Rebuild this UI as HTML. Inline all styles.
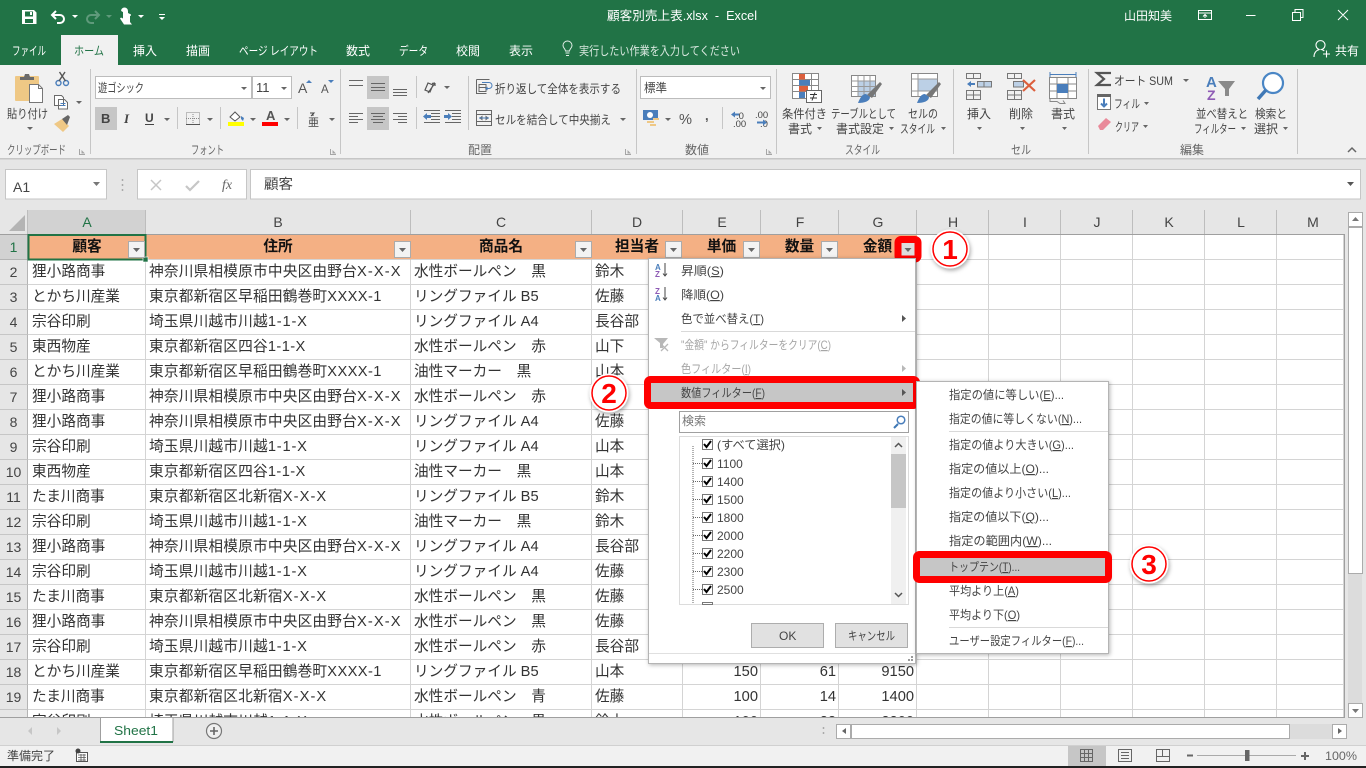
<!DOCTYPE html>
<html lang="ja"><head><meta charset="utf-8"><title>顧客別売上表.xlsx - Excel</title>
<style>
html,body{margin:0;padding:0;width:1366px;height:768px;overflow:hidden;background:#e6e6e6}
body{position:relative;font-family:"Liberation Sans","Noto Sans CJK JP",sans-serif}
#grid{position:absolute;left:0;top:235px;width:1345px;height:482px;overflow:hidden;background:#fff}
table{border-collapse:separate;border-spacing:0;table-layout:fixed;width:1344px;font-size:14.67px;color:#333}
td{height:25px;box-sizing:border-box;border-right:1px solid #d4d4d4;border-bottom:1px solid #d4d4d4;padding:0 0 0 3px;white-space:nowrap;overflow:hidden;line-height:23px}
td:nth-child(2){padding-left:4px}
td:nth-child(3){letter-spacing:.2px}
td.r{background:#e6e6e6;text-align:center;padding:0;border-right:1px solid #b4b4b4;border-bottom:1px solid #c6c6c6;font-size:14px;color:#444}
tr.h td{background:#f4b084;text-align:center;font-weight:bold;color:#111;padding:0;border-color:#f4b084;border-bottom-color:#d4d4d4;letter-spacing:0}
tr.h td:nth-child(2){padding-left:1px}
tr.h td.r{background:#d2d2d2;color:#217346;font-weight:normal;border-color:#b4b4b4}
td.n{text-align:right;padding:0 2px 0 0}
i{font-style:normal;letter-spacing:1.1px}
i.q{letter-spacing:.4px}
i.p{letter-spacing:.8px}
svg{position:absolute;left:0;top:0}
svg text{font-family:"Liberation Sans","Noto Sans CJK JP",sans-serif;font-size:12px;fill:#444}
.w{fill:#fff}.d{fill:#666}.gr{fill:#a6a6a6}
.u{text-decoration:underline}
.b{fill:#4a7ebb}.l{fill:none;stroke:#666;stroke-width:1}
.s{fill:none;stroke:#fff;stroke-width:1.5}
.c{fill:none;stroke:#777;stroke-width:1}
</style></head><body>
<div id="grid"><table>
<colgroup><col style="width:28px"><col style="width:118px"><col style="width:265px"><col style="width:181px"><col style="width:91px"><col style="width:78px"><col style="width:78px"><col style="width:78px"><col style="width:72px"><col style="width:72px"><col style="width:72px"><col style="width:72px"><col style="width:72px"><col style="width:67px"></colgroup>
<tr class="h"><td class="r">1</td><td>顧客</td><td>住所</td><td>商品名</td><td>担当者</td><td>単価</td><td>数量</td><td>金額</td><td style="background:#fff;border-color:#d4d4d4"></td><td style="background:#fff;border-color:#d4d4d4"></td><td style="background:#fff;border-color:#d4d4d4"></td><td style="background:#fff;border-color:#d4d4d4"></td><td style="background:#fff;border-color:#d4d4d4"></td><td style="background:#fff;border-color:#d4d4d4"></td></tr>
<tr><td class="r">2</td><td>狸小路商事</td><td>神奈川県相模原市中央区由野台<i>X-X-X</i></td><td>水性ボールペン　黒</td><td>鈴木</td><td></td><td></td><td></td><td></td><td></td><td></td><td></td><td></td><td></td></tr>
<tr><td class="r">3</td><td>とかち川産業</td><td>東京都新宿区早稲田鶴巻町<i class="q">XXXX-1</i></td><td>リングファイル B5</td><td>佐藤</td><td></td><td></td><td></td><td></td><td></td><td></td><td></td><td></td><td></td></tr>
<tr><td class="r">4</td><td>宗谷印刷</td><td>埼玉県川越市川越<i class="p">1-1-X</i></td><td>リングファイル A4</td><td>長谷部</td><td></td><td></td><td></td><td></td><td></td><td></td><td></td><td></td><td></td></tr>
<tr><td class="r">5</td><td>東西物産</td><td>東京都新宿区四谷<i class="q">1-1-X</i></td><td>水性ボールペン　赤</td><td>山下</td><td></td><td></td><td></td><td></td><td></td><td></td><td></td><td></td><td></td></tr>
<tr><td class="r">6</td><td>とかち川産業</td><td>東京都新宿区早稲田鶴巻町<i class="q">XXXX-1</i></td><td>油性マーカー　黒</td><td>山本</td><td></td><td></td><td></td><td></td><td></td><td></td><td></td><td></td><td></td></tr>
<tr><td class="r">7</td><td>狸小路商事</td><td>神奈川県相模原市中央区由野台<i>X-X-X</i></td><td>水性ボールペン　赤</td><td>鈴木</td><td></td><td></td><td></td><td></td><td></td><td></td><td></td><td></td><td></td></tr>
<tr><td class="r">8</td><td>狸小路商事</td><td>神奈川県相模原市中央区由野台<i>X-X-X</i></td><td>リングファイル A4</td><td>佐藤</td><td></td><td></td><td></td><td></td><td></td><td></td><td></td><td></td><td></td></tr>
<tr><td class="r">9</td><td>宗谷印刷</td><td>埼玉県川越市川越<i class="p">1-1-X</i></td><td>リングファイル A4</td><td>山本</td><td></td><td></td><td></td><td></td><td></td><td></td><td></td><td></td><td></td></tr>
<tr><td class="r">10</td><td>東西物産</td><td>東京都新宿区四谷<i class="q">1-1-X</i></td><td>油性マーカー　黒</td><td>山本</td><td></td><td></td><td></td><td></td><td></td><td></td><td></td><td></td><td></td></tr>
<tr><td class="r">11</td><td>たま川商事</td><td>東京都新宿区北新宿<i>X-X-X</i></td><td>リングファイル B5</td><td>鈴木</td><td></td><td></td><td></td><td></td><td></td><td></td><td></td><td></td><td></td></tr>
<tr><td class="r">12</td><td>宗谷印刷</td><td>埼玉県川越市川越<i class="p">1-1-X</i></td><td>油性マーカー　黒</td><td>鈴木</td><td></td><td></td><td></td><td></td><td></td><td></td><td></td><td></td><td></td></tr>
<tr><td class="r">13</td><td>狸小路商事</td><td>神奈川県相模原市中央区由野台<i>X-X-X</i></td><td>リングファイル A4</td><td>長谷部</td><td></td><td></td><td></td><td></td><td></td><td></td><td></td><td></td><td></td></tr>
<tr><td class="r">14</td><td>宗谷印刷</td><td>埼玉県川越市川越<i class="p">1-1-X</i></td><td>リングファイル A4</td><td>佐藤</td><td></td><td></td><td></td><td></td><td></td><td></td><td></td><td></td><td></td></tr>
<tr><td class="r">15</td><td>たま川商事</td><td>東京都新宿区北新宿<i>X-X-X</i></td><td>水性ボールペン　黒</td><td>佐藤</td><td></td><td></td><td></td><td></td><td></td><td></td><td></td><td></td><td></td></tr>
<tr><td class="r">16</td><td>狸小路商事</td><td>神奈川県相模原市中央区由野台<i>X-X-X</i></td><td>水性ボールペン　黒</td><td>佐藤</td><td></td><td></td><td></td><td></td><td></td><td></td><td></td><td></td><td></td></tr>
<tr><td class="r">17</td><td>宗谷印刷</td><td>埼玉県川越市川越<i class="p">1-1-X</i></td><td>水性ボールペン　赤</td><td>長谷部</td><td></td><td></td><td></td><td></td><td></td><td></td><td></td><td></td><td></td></tr>
<tr><td class="r">18</td><td>とかち川産業</td><td>東京都新宿区早稲田鶴巻町<i class="q">XXXX-1</i></td><td>リングファイル B5</td><td>山本</td><td class="n">150</td><td class="n">61</td><td class="n">9150</td><td></td><td></td><td></td><td></td><td></td><td></td></tr>
<tr><td class="r">19</td><td>たま川商事</td><td>東京都新宿区北新宿<i>X-X-X</i></td><td>水性ボールペン　青</td><td>佐藤</td><td class="n">100</td><td class="n">14</td><td class="n">1400</td><td></td><td></td><td></td><td></td><td></td><td></td></tr>
<tr><td class="r">20</td><td>宗谷印刷</td><td>埼玉県川越市川越<i class="p">1-1-X</i></td><td>水性ボールペン　黒</td><td>鈴木</td><td class="n">100</td><td class="n">22</td><td class="n">2200</td><td></td><td></td><td></td><td></td><td></td><td></td></tr>
</table></div>

<svg width="1366" height="768" viewBox="0 0 1366 768">
<defs>
<filter id="sh" x="-10%" y="-10%" width="120%" height="120%"><feDropShadow dx="1" dy="1" stdDeviation="2" flood-color="#000" flood-opacity=".3"/></filter>
<filter id="sc" x="-30%" y="-30%" width="160%" height="160%"><feDropShadow dx="1" dy="2" stdDeviation="2" flood-color="#000" flood-opacity=".35"/></filter>
</defs>
<!-- title bar -->
<rect width="1366" height="65" fill="#217346"/>
<rect x="61" y="35" width="57" height="30" fill="#f1f1f1"/>
<rect y="65" width="1366" height="93" fill="#f1f1f1"/>
<rect y="158" width="1366" height="1.5" fill="#c6c6c6"/>
<path class="w" d="M22 10h12l2.500 2.500V24H22zM25 11.500v5h8v-5zM25 19v4h8v-4zM30 12h2v3h-2z" fill-rule="evenodd"/>
<path d="M56 11l-4 4 4 4M52 15h8a4 4 0 0 1 0 8h-3" fill="none" stroke="#fff" stroke-width="2"/>
<path class="w" d="M72 15h6l-3 3z"/>
<path d="M95 11l4 4-4 4M99 15h-8a4 4 0 0 0 0 8h3" fill="none" stroke="#5f9a7b" stroke-width="2"/>
<path d="M106 15h6l-3 3z" fill="#5f9a7b"/>
<path class="w" d="M121 11a3.500 3.500 0 0 1 7 0v2l3 1.500v1l-1 .5v6l2 2.500h-8l-4-6 1-1 2 1v-6.500a3 3 0 0 1-2-1.500z"/>
<path class="w" d="M138 15h6l-3 3z"/>
<path class="w" d="M159 14h6v1h-6zM159 17h6l-3 3z"/>
<text x="607" y="20" class="w" textLength="150" lengthAdjust="spacingAndGlyphs" style="font-size:12.500px;fill:#fff">顧客別売上表.xlsx&#160;&#160;-&#160;&#160;Excel</text>
<text x="1124" y="20" textLength="48" lengthAdjust="spacingAndGlyphs" style="fill:#fff">山田知美</text>
<path class="s" style="stroke-width:1" d="M1198.500 10.500h13v9h-13zM1198 13h14M1205 18v-3M1203 16.500l2-2 2 2"/>
<path class="s" style="stroke-width:1" d="M1246 15.500h9.500M1292.500 12.500h8v8h-8zM1295 12v-2.500h8v8h-2.500M1338 10l10 10M1348 10l-10 10"/>
<text x="12" y="55" textLength="34" lengthAdjust="spacingAndGlyphs" style="fill:#fff">ファイル</text>
<text x="74" y="55" textLength="30" lengthAdjust="spacingAndGlyphs" style="fill:#217346">ホーム</text>
<text x="133" y="55" textLength="24" lengthAdjust="spacingAndGlyphs" style="fill:#fff">挿入</text>
<text x="186" y="55" textLength="24" lengthAdjust="spacingAndGlyphs" style="fill:#fff">描画</text>
<text x="239" y="55" textLength="79" lengthAdjust="spacingAndGlyphs" style="fill:#fff">ページ レイアウト</text>
<text x="346" y="55" textLength="24" lengthAdjust="spacingAndGlyphs" style="fill:#fff">数式</text>
<text x="399" y="55" textLength="29" lengthAdjust="spacingAndGlyphs" style="fill:#fff">データ</text>
<text x="456" y="55" textLength="24" lengthAdjust="spacingAndGlyphs" style="fill:#fff">校閲</text>
<text x="509" y="55" textLength="24" lengthAdjust="spacingAndGlyphs" style="fill:#fff">表示</text>
<path d="M565.500 53h4M566 55.500h3M565.500 51c0-2-2.500-3-2.500-5.500a4.500 4.500 0 0 1 9 0c0 2.500-2.500 3.500-2.500 5.500z" fill="none" stroke="#e4efe9" stroke-width="1"/>
<text x="579" y="55" textLength="161" lengthAdjust="spacingAndGlyphs" style="fill:#dbe9e1">実行したい作業を入力してください</text>
<path d="M1314 57c0-5 3-7 5.500-7.500a4.500 4.500 0 1 1 2 0c1 .3 2 .7 2.800 1.500M1323 54h7M1326.500 50.500v7" fill="none" stroke="#fff" stroke-width="1.100"/>
<text x="1335" y="55" textLength="24" lengthAdjust="spacingAndGlyphs" style="fill:#fff">共有</text>

<!-- separators -->
<path d="M90.500 69v85M340.500 69v85M636.500 69v85M776.500 69v85M953.500 69v85M1088.500 69v85M1297.500 69v85M416.500 76v22M416.500 107v22M468.500 76v54M177.500 107v22M220.500 107v22M297.500 107v22M722.500 107v22" stroke="#c6c6c6" fill="none"/>

<!-- clipboard -->
<rect x="15" y="76" width="24" height="25" rx="1" fill="#efc885"/>
<path d="M20 80v-3h4l1-3h4l1 3h4v3z" fill="#6a6a6a"/>
<path d="M29.500 84.500h9l4 4v14h-13z" fill="#fff" stroke="#777"/>
<path d="M38.500 84.500v4h4" fill="none" stroke="#777"/>
<circle cx="58.500" cy="83" r="2.500" fill="none" stroke="#4a7ebb" stroke-width="1.400"/><circle cx="66" cy="83" r="2.500" fill="none" stroke="#4a7ebb" stroke-width="1.400"/>
<path d="M59 81l6-9M65.500 81l-6-9" stroke="#555" stroke-width="1.400" fill="none"/>
<path d="M54.500 95.500h7l2 2v8h-9zM58.500 99.500h6l3 3v6.500h-9z" fill="#fff" stroke="#6a6a6a"/>
<path d="M60.500 103.500h5M60.500 105.500h5" stroke="#4a7ebb"/>
<path class="d" d="M76 101h6l-3 3z"/>
<path d="M54 124l8-5 7 7-6 6z" fill="#efc885"/><path d="M62 119l6-4 2 2-3 8z" fill="#666"/>
<path class="d" d="M27 127h6l-3 3z"/>
<text x="7" y="118" textLength="41" lengthAdjust="spacingAndGlyphs">貼り付け</text>
<text x="7" y="154" textLength="59" lengthAdjust="spacingAndGlyphs" style="fill:#666">クリップボード</text>
<path class="gr" d="M79 149h1v5h5v1h-6zM81.500 150l3.500 3.500h-3.500z"/>

<!-- font -->
<rect x="95.500" y="76.500" width="156" height="22" fill="#fff" stroke="#bcbcbc"/>
<rect x="252.500" y="76.500" width="39" height="22" fill="#fff" stroke="#bcbcbc"/>
<text x="98" y="92" textLength="46" lengthAdjust="spacingAndGlyphs">遊ゴシック</text>
<text x="256" y="92" style="font-size:13px">11</text>
<path class="d" d="M241 87h6l-3 3zM281 87h6l-3 3z"/>
<text x="298" y="93" style="font-size:14px;fill:#555">A</text><path class="b" d="M306 83l3-3 3 3z"/>
<text x="321" y="93" style="font-size:11.500px;fill:#555">A</text><path class="b" d="M328 80h6l-3 3z"/>
<rect x="95" y="107" width="22" height="23" fill="#c6c6c6"/>
<text x="101" y="123" style="font-weight:bold;font-size:13px">B</text>
<text x="124" y="123" style="font-style:italic;font-weight:bold;font-size:13px;font-family:'Liberation Serif',serif">I</text>
<text x="145" y="122" style="font-weight:bold;font-size:12px">U</text>
<path d="M145 124.500h9" stroke="#444"/>
<path class="d" d="M164 118h6l-3 3zM207 118h6l-3 3zM250 118h6l-3 3zM284 118h6l-3 3zM329 118h6l-3 3z"/>
<path d="M186.500 112.500h13v12h-13zM193 112v13M186 118.500h14" fill="none" stroke="#888" stroke-dasharray="1 1"/>
<path d="M186 124.500h14" stroke="#555"/>
<path d="M230 117l5-5 5 5-5 4z" fill="#fff" stroke="#555"/><path d="M241 116l3 2-1 3-2-2z" fill="#4a7ebb"/>
<rect x="228" y="122" width="16" height="4" fill="#ff0"/>
<text x="266" y="120" style="font-size:13px;font-weight:bold;fill:#555">A</text>
<rect x="262" y="122" width="16" height="4" fill="#f00"/>
<path d="M310 113h4l-3 3M313 113v3" fill="none" stroke="#444"/>
<text x="308" y="126" style="font-size:11px;fill:#444">亜</text>
<text x="191" y="154" textLength="33" lengthAdjust="spacingAndGlyphs" style="fill:#666">フォント</text>
<path class="gr" d="M330 149h1v5h5v1h-6zM332.500 150l3.500 3.500h-3.500z"/>

<!-- alignment -->
<rect x="367" y="76" width="22" height="23" fill="#c6c6c6"/><rect x="367" y="107" width="22" height="23" fill="#c6c6c6"/>
<path class="l" d="M349 80.500h14M349 85.500h14M371 83.500h14M371 87.500h14M371 90.500h14M393 89.500h14M393 92.500h14M393 95.500h14"/>
<path class="l" d="M349 113.500h14M349 116.500h9M349 119.500h14M349 122.500h9M371 113.500h14M373 116.500h10M371 119.500h14M373 122.500h10M393 113.500h14M398 116.500h9M393 119.500h14M398 122.500h9"/>
<path d="M425 90l3-7 5 2-3 7zM435 83l-7 10M435 83l-3 .5M435 83v3" fill="none" stroke="#555" stroke-width="1.200"/>
<path class="d" d="M444 86h6l-3 3z"/>
<path class="l" d="M431 113.500h9M431 116.500h9M431 119.500h9M424 122.500h16M424 110.500h16"/>
<path class="b" d="M423 116.500l4-3.500v2h4v3h-4v2z"/>
<path class="l" d="M445 110.500h16M452 113.500h9M452 116.500h9M452 119.500h9M445 122.500h16"/>
<path class="b" d="M452 116.500l-4-3.500v2h-4v3h4v2z"/>
<path d="M476.500 79.500h13M476.500 79.500v14h10M479 84.500h7v7h-7zM479 87.500h7" fill="none" stroke="#666"/>
<path d="M482 82.500h7a2 2 0 0 1 0 6h-3l1.500-1.500M486 88.500l1.500 1.500" fill="none" stroke="#4a7ebb"/>
<text x="495" y="93" textLength="126" lengthAdjust="spacingAndGlyphs">折り返して全体を表示する</text>
<path d="M476.500 110.500h15v15h-15zM476.500 114.500h15M476.500 121.500h15M480 118h8M480 118l2-1.500v3zM488 118l-2-1.500v3z" fill="none" stroke="#666"/>
<path d="M479 118h10" stroke="#4a7ebb"/>
<text x="495" y="124" textLength="116" lengthAdjust="spacingAndGlyphs">セルを結合して中央揃え</text>
<path class="d" d="M620 118h6l-3 3z"/>
<text x="468" y="154" textLength="24" lengthAdjust="spacingAndGlyphs" style="fill:#666">配置</text>
<path class="gr" d="M625 149h1v5h5v1h-6zM627.500 150l3.500 3.500h-3.500z"/>

<!-- number -->
<rect x="640.500" y="76.500" width="130" height="22" fill="#fff" stroke="#bcbcbc"/>
<text x="644" y="92" textLength="23" lengthAdjust="spacingAndGlyphs">標準</text>
<path class="d" d="M760 87h6l-3 3z"/>
<rect x="643" y="110" width="15" height="10" fill="#4a7ebb"/><circle cx="650" cy="115" r="3" fill="#fff"/>
<path d="M653 118h6v2h-6zM647 121h7v2h-7zM650 124h6v2h-6z" fill="#efc885"/>
<path class="d" d="M665 118h6l-3 3z"/>
<text x="679" y="124" textLength="13" lengthAdjust="spacingAndGlyphs" style="font-size:15px;fill:#555">%</text>
<text x="705" y="120" style="font-size:13px;font-weight:bold;fill:#555">,</text>
<path class="b" d="M731 114.500l4-3v2h4v2h-4v2z"/>
<text x="736" y="119" style="font-size:9.500px">.0</text><text x="733" y="127" style="font-size:9.500px">.00</text>
<text x="755" y="118" style="font-size:9.500px">.00</text><text x="760" y="127" style="font-size:9.500px">.0</text>
<path class="b" d="M767 122.500l-4-3v2h-6v2h6v2z"/>
<text x="685" y="154" textLength="24" lengthAdjust="spacingAndGlyphs" style="fill:#666">数値</text>
<path class="gr" d="M766 149h1v5h5v1h-6zM768.500 150l3.500 3.500h-3.500z"/>

<!-- styles -->
<path d="M792.500 73.500h26v25h-26zM792.500 79.500h26M792.500 85.500h26M792.500 91.500h26M799.500 73.500v25M811.500 73.500v25" fill="#fff" stroke="#888"/>
<rect x="799" y="74" width="6" height="5.500" fill="#dc5f3d"/><rect x="799" y="80" width="11" height="5.500" fill="#4a7ebb"/><rect x="799" y="86" width="9" height="5.500" fill="#dc5f3d"/><rect x="799" y="92" width="6" height="6" fill="#4a7ebb"/>
<rect x="806.500" y="90.500" width="15" height="12" fill="#fff" stroke="#666"/>
<path d="M810 94.500h7M810 98h7M815 92.500l-3 8" stroke="#333" fill="none"/>
<text x="782" y="118" textLength="45" lengthAdjust="spacingAndGlyphs">条件付き</text>
<text x="788" y="133" textLength="24" lengthAdjust="spacingAndGlyphs">書式</text>
<path class="d" d="M817 127h5l-2.500 3z"/>
<rect x="851.500" y="75.500" width="24" height="21" fill="#fff" stroke="#888"/>
<rect x="858" y="81" width="17" height="15" fill="#bcd0e6"/>
<path d="M851.500 81h24M851.500 86.500h24M851.500 91.500h24M858 75.500v21M864 75.500v21M870 75.500v21" fill="none" stroke="#999"/>
<path d="M867 95l13-13 2 2-10 14z" fill="#777"/>
<path d="M858 103c2-5 4-9 8-9l4 3c0 4-5 6-12 6z" fill="#4a7ebb"/>
<text x="831" y="118" textLength="65" lengthAdjust="spacingAndGlyphs">テーブルとして</text>
<text x="836" y="133" textLength="48" lengthAdjust="spacingAndGlyphs">書式設定</text>
<path class="d" d="M889 127h5l-2.500 3z"/>
<rect x="911.500" y="73.500" width="26" height="23" fill="#fff" stroke="#888"/>
<rect x="918" y="79" width="19" height="12" fill="#bcd0e6"/>
<path d="M911.500 79h26M911.500 91h26M918 73.500v23" fill="none" stroke="#999"/>
<path d="M926 95l13-13 2 2-10 14z" fill="#777"/>
<path d="M917 103c2-5 4-9 8-9l4 3c0 4-5 6-12 6z" fill="#4a7ebb"/>
<text x="908" y="118" textLength="30" lengthAdjust="spacingAndGlyphs">セルの</text>
<text x="900" y="133" textLength="35" lengthAdjust="spacingAndGlyphs">スタイル</text>
<path class="d" d="M941 127h5l-2.500 3z"/>
<text x="845" y="154" textLength="35" lengthAdjust="spacingAndGlyphs" style="fill:#666">スタイル</text>

<!-- cells -->
<path class="c" d="M966.500 73.500h14v5h-14zM973.500 73.500v5M966.500 90.500h14v9h-14zM966.500 95h14M973.500 90.500v9"/>
<rect x="977.500" y="81.500" width="14" height="5.500" fill="#bcd0e6" stroke="#777"/><path d="M984 81.500v5.500" stroke="#777"/>
<path class="b" d="M967 84l4-3v2h4v2h-4v2z"/>
<path class="c" d="M1007.500 73.500h14v5h-14zM1014.500 73.500v5M1007.500 90.500h14v9h-14zM1007.500 95h14M1014.500 90.500v9"/>
<rect x="1013.500" y="81.500" width="10" height="5.500" fill="#bcd0e6" stroke="#777"/>
<path d="M1023 80l12 11M1035 80l-12 11" stroke="#dc5f3d" stroke-width="2.200" fill="none"/>
<path d="M1049.500 77.500h27v21h-27zM1049.500 84h27M1049.500 91h27M1057 77.500v21M1068 77.500v21" fill="#fff" stroke="#888"/>
<rect x="1057" y="84" width="11" height="9" fill="#4a7ebb"/>
<path d="M1050 74.500h26M1050 72v5M1076 72v5" stroke="#4a7ebb" fill="none"/>
<path d="M1050 98.500v3h7l3 2h5l-2-3" stroke="#888" fill="none"/>
<text x="967" y="118" textLength="24" lengthAdjust="spacingAndGlyphs">挿入</text>
<text x="1009" y="118" textLength="24" lengthAdjust="spacingAndGlyphs">削除</text>
<text x="1051" y="118" textLength="24" lengthAdjust="spacingAndGlyphs">書式</text>
<path class="d" d="M977 127h5l-2.500 3zM1020 127h5l-2.500 3zM1062 127h5l-2.500 3z"/>
<text x="1011" y="154" textLength="20" lengthAdjust="spacingAndGlyphs" style="fill:#666">セル</text>

<!-- editing -->
<path d="M1111 73h-14l7 6-7 6h14" fill="none" stroke="#555" stroke-width="2.200"/>
<text x="1114" y="85" textLength="59" lengthAdjust="spacingAndGlyphs">オート SUM</text>
<path class="d" d="M1183 79h6l-3 3z"/>
<rect x="1097.500" y="94.500" width="13" height="15" fill="#fff" stroke="#777"/><rect x="1097" y="94" width="14" height="3" fill="#666"/>
<path d="M1104 98.500v8M1101 103.500l3 3 3-3" fill="none" stroke="#4a7ebb" stroke-width="2"/>
<text x="1114" y="108" textLength="26" lengthAdjust="spacingAndGlyphs">フィル</text>
<path class="d" d="M1144 102h5l-2.500 3z"/>
<path d="M1098 126l8-8 5 4-8 8h-3z" fill="#e98a9a"/>
<text x="1115" y="131" textLength="24" lengthAdjust="spacingAndGlyphs">クリア</text>
<path class="d" d="M1143 125h5l-2.500 3z"/>
<text x="1206" y="87" style="font-size:15px;font-weight:bold;fill:#4a7ebb">A</text>
<text x="1207" y="100" style="font-size:14px;font-weight:bold;fill:#8e5bb5">Z</text>
<path d="M1218 81h17l-6 8v7l-4 0v-7z" fill="#8a8a8a"/>
<text x="1196" y="118" textLength="52" lengthAdjust="spacingAndGlyphs">並べ替えと</text>
<text x="1194" y="133" textLength="42" lengthAdjust="spacingAndGlyphs">フィルター</text>
<path class="d" d="M1241 127h5l-2.500 3z"/>
<circle cx="1273" cy="83" r="10" fill="#fff" stroke="#4a86c5" stroke-width="2.200"/>
<path d="M1266 90l-8 9" stroke="#3f78b5" stroke-width="3.500"/>
<text x="1255" y="118" textLength="32" lengthAdjust="spacingAndGlyphs">検索と</text>
<text x="1254" y="133" textLength="24" lengthAdjust="spacingAndGlyphs">選択</text>
<path class="d" d="M1283 127h5l-2.500 3z"/>
<text x="1180" y="154" textLength="24" lengthAdjust="spacingAndGlyphs" style="fill:#666">編集</text>
<path d="M1348 152l4-4 4 4" fill="none" stroke="#666" stroke-width="1.500"/>

<!-- formula bar -->
<rect x="5.500" y="169.500" width="101" height="29.500" fill="#fff" stroke="#c6c6c6"/>
<text x="13" y="192" style="font-size:14px">A1</text>
<path d="M93 182h7l-3.500 4z" fill="#777"/>
<path d="M122.500 179v2M122.500 184v2M122.500 189v2" stroke="#aaa" stroke-width="1.500"/>
<rect x="137.500" y="169.500" width="109" height="29.500" fill="#fff" stroke="#c6c6c6"/>
<rect x="250.500" y="169.500" width="1110" height="29.500" fill="#fff" stroke="#c6c6c6"/>
<path d="M151 180l10 10M161 180l-10 10" stroke="#c6c6c6" stroke-width="1.500"/>
<path d="M186 186l4 4 9-9" stroke="#c6c6c6" stroke-width="2.200" fill="none"/>
<text x="222" y="189" style="font-family:'Liberation Serif',serif;font-style:italic;font-size:14px;fill:#666">fx</text>
<text x="264" y="189" textLength="29" lengthAdjust="spacingAndGlyphs" style="font-size:14px">顧客</text>
<path d="M1347 182h7l-3.500 4z" fill="#555"/>

<!-- column headers -->
<rect y="210" width="1345" height="24" fill="#e6e6e6"/>
<rect x="28" y="210" width="118" height="24" fill="#d2d2d2"/>
<path d="M25 215v16H9z" fill="#b4b4b4"/>
<path d="M27.500 210v24M145.500 210v24M410.500 210v24M591.500 210v24M682.500 210v24M760.500 210v24M838.500 210v24M916.500 210v24M988.500 210v24M1060.500 210v24M1132.500 210v24M1204.500 210v24M1276.500 210v24" stroke="#bdbdbd" fill="none"/>
<path d="M0 234.500h1345M1344.500 234v483M0 717.500h1345" stroke="#9f9f9f" fill="none"/>
<g style="text-anchor:middle">
<text x="87" y="227" style="font-size:14px;fill:#217346">A</text><text x="278" y="227" style="font-size:14px">B</text><text x="501" y="227" style="font-size:14px">C</text><text x="637" y="227" style="font-size:14px">D</text><text x="722" y="227" style="font-size:14px">E</text><text x="800" y="227" style="font-size:14px">F</text><text x="878" y="227" style="font-size:14px">G</text><text x="953" y="227" style="font-size:14px">H</text><text x="1025" y="227" style="font-size:14px">I</text><text x="1097" y="227" style="font-size:14px">J</text><text x="1169" y="227" style="font-size:14px">K</text><text x="1241" y="227" style="font-size:14px">L</text><text x="1313" y="227" style="font-size:14px">M</text>
</g>
<!-- selection -->
<rect x="28.500" y="235" width="117" height="24.500" fill="none" stroke="#217346" stroke-width="2"/>
<rect x="143" y="257" width="5" height="5" fill="#217346" stroke="#fff" stroke-width=".6"/>
<!-- filter buttons -->
<g fill="#f3f3f3" stroke="#ababab">
<rect x="128.500" y="241.500" width="16" height="16"/><rect x="394.500" y="241.500" width="16" height="16"/><rect x="575.500" y="241.500" width="16" height="16"/><rect x="665.500" y="241.500" width="16" height="16"/><rect x="743.500" y="241.500" width="16" height="16"/><rect x="821.500" y="241.500" width="16" height="16"/>
</g>
<rect x="898" y="239.500" width="20" height="19.500" rx="3" fill="#ddd" stroke="#f00" stroke-width="7"/>
<path fill="#666" d="M133 248h7l-3.500 4zM399 248h7l-3.500 4zM580 248h7l-3.500 4zM670 248h7l-3.500 4zM748 248h7l-3.500 4zM826 248h7l-3.500 4zM904.500 248h7l-3.500 4z"/>

<!-- sheet bar & status -->
<rect y="718" width="1366" height="27" fill="#e6e6e6"/>
<path d="M100.500 742v-24.500h72.500v24.500" fill="#fff" stroke="#9f9f9f"/>
<rect x="100" y="741" width="73" height="2" fill="#217346"/>
<text x="114" y="735" textLength="44" lengthAdjust="spacingAndGlyphs" style="font-size:13px;fill:#217346">Sheet1</text>
<path d="M32 727l-4 4 4 4zM57 727l4 4-4 4z" fill="#c6c6c6"/>
<circle cx="214" cy="731" r="7.500" fill="#f0f0f0" stroke="#777" stroke-width="1.200"/><path d="M210 731h8M214 727v8" stroke="#666" stroke-width="1.600"/>
<path d="M823.500 727v2M823.500 732v2" stroke="#aaa" stroke-width="1.500"/>
<rect x="836" y="724" width="511" height="15" fill="#dcdcdc"/>
<rect x="836.500" y="724.500" width="14" height="14" fill="#fff" stroke="#ababab"/><path d="M846 728v6l-4-3z" fill="#666"/>
<rect x="851.500" y="724.500" width="438" height="14" fill="#fff" stroke="#ababab"/>
<rect x="1332.500" y="724.500" width="14" height="14" fill="#fff" stroke="#ababab"/><path d="M1338 728v6l4-3z" fill="#666"/>
<rect x="1346" y="210" width="20" height="507" fill="#e6e6e6"/>
<rect x="1348" y="212" width="14" height="505" fill="#dcdcdc"/>
<rect x="1348.500" y="212.500" width="14" height="14" fill="#fff" stroke="#ababab"/><path d="M1352 221h7l-3.500-4z" fill="#777"/>
<rect x="1348.500" y="227.500" width="14" height="346" fill="#fff" stroke="#ababab"/>
<rect x="1348.500" y="703.500" width="14" height="14" fill="#fff" stroke="#ababab"/><path d="M1352 709h7l-3.500 4z" fill="#777"/>
<rect y="745" width="1366" height="21" fill="#f1f1f1"/>
<path d="M0 745.500h1366" stroke="#d0d0d0"/>
<rect y="766" width="1366" height="2" fill="#222"/>
<text x="7" y="760" textLength="48" lengthAdjust="spacingAndGlyphs">準備完了</text>
<rect x="76.500" y="752.500" width="11" height="9" fill="#fff" stroke="#555"/><circle cx="78" cy="751" r="2.500" fill="#444"/><path d="M78 755h8M78 757.500h8M78 760h8M81 754v7M84 754v7" stroke="#555" stroke-width=".8" fill="none"/>
<rect x="1068" y="746" width="38" height="20" fill="#c6c6c6"/>
<path class="l" d="M1080.500 749.500h12v12h-12zM1084.500 749.500v12M1088.500 749.500v12M1080.500 753.500h12M1080.500 757.500h12"/>
<path class="l" d="M1118.500 749.500h13v12h-13zM1121 752.500h8M1121 755.500h8M1121 758.500h8"/>
<path class="l" d="M1156.500 749.500h13v12h-13zM1156.500 756.500h13M1162.500 749.500v7"/>
<path d="M1187 755.500h6" stroke="#666" stroke-width="2"/>
<path d="M1197 755.500h99" stroke="#aaa"/>
<rect x="1245" y="750" width="4.500" height="11" fill="#666"/>
<path d="M1301 756h8M1305 752v8" stroke="#666" stroke-width="2"/>
<text x="1325" y="760" textLength="32" lengthAdjust="spacingAndGlyphs" style="fill:#666">100%</text>

<!-- dropdown menu -->
<rect x="648.500" y="258.500" width="267" height="405" fill="#fff" stroke="#b4b4b4" filter="url(#sh)"/>
<text x="655" y="270" style="font-size:8px;font-weight:bold;fill:#4a7ebb">A</text><text x="655" y="277" style="font-size:8px;font-weight:bold;fill:#8e5bb5">Z</text>
<path d="M665 263v13M663 273.500l2 2.500 2-2.500" stroke="#444" fill="none"/>
<text x="655" y="294" style="font-size:8px;font-weight:bold;fill:#8e5bb5">Z</text><text x="655" y="301" style="font-size:8px;font-weight:bold;fill:#4a7ebb">A</text>
<path d="M665 287v13M663 297.500l2 2.500 2-2.500" stroke="#444" fill="none"/>
<text x="681" y="275" textLength="43" lengthAdjust="spacingAndGlyphs">昇順(<tspan class="u">S</tspan>)</text>
<text x="681" y="299" textLength="43" lengthAdjust="spacingAndGlyphs">降順(<tspan class="u">O</tspan>)</text>
<text x="681" y="323" textLength="83" lengthAdjust="spacingAndGlyphs">色で並べ替え(<tspan class="u">T</tspan>)</text>
<path d="M902 315v7l4-3.500z" fill="#555"/>
<path d="M681 331.500h234" stroke="#d9d9d9"/>
<path d="M654 338h14l-5 6v4h-3v-5z" fill="#b8b8b8"/><path d="M661 344l7 7M668 344l-7 7" stroke="#b8b8b8" stroke-width="1.300"/>
<text x="681" y="349" textLength="150" lengthAdjust="spacingAndGlyphs" style="fill:#a6a6a6">"金額" からフィルターをクリア(<tspan class="u">C</tspan>)</text>
<text x="681" y="373" textLength="70" lengthAdjust="spacingAndGlyphs" style="fill:#a6a6a6">色フィルター(<tspan class="u">I</tspan>)</text>
<path d="M902 365v7l4-3.500z" fill="#b8b8b8"/>
<rect x="647.500" y="379.500" width="269" height="26" rx="3" fill="#c6c6c6" stroke="#f00" stroke-width="7"/>
<text x="681" y="397" textLength="84" lengthAdjust="spacingAndGlyphs">数値フィルター(<tspan class="u">F</tspan>)</text>
<path d="M902 389v7l4-3.500z" fill="#555"/>
<rect x="679.500" y="411.500" width="229" height="21" fill="#fff" stroke="#a0a0a0"/>
<text x="682" y="425" textLength="24" lengthAdjust="spacingAndGlyphs" style="fill:#777">検索</text>
<circle cx="901" cy="420" r="3.800" fill="none" stroke="#4a7ebb" stroke-width="1.500"/><path d="M898 424l-4 4" stroke="#3f78b5" stroke-width="2"/>
<rect x="679.500" y="436.500" width="229" height="168" fill="#fff" stroke="#dcdcdc"/>
<rect x="891" y="437" width="15" height="167" fill="#f0f0f0"/><rect x="891" y="454" width="15" height="54" fill="#c6c6c6"/>
<path d="M895 447l3.500-3.500 3.500 3.500M895 593l3.500 3.500 3.500-3.500" fill="none" stroke="#555" stroke-width="1.500"/>
<path d="M693 446v158M693 463.500h9M693 481.500h9M693 499.500h9M693 517.500h9M693 535.500h9M693 553.500h9M693 571.500h9M693 589.500h9" fill="none" stroke="#666" stroke-dasharray="1 1"/>
<g fill="#fff" stroke="#777"><rect x="702.500" y="439.500" width="10" height="10"/><rect x="702.500" y="458.500" width="10" height="10"/><rect x="702.500" y="476.500" width="10" height="10"/><rect x="702.500" y="494.500" width="10" height="10"/><rect x="702.500" y="512.500" width="10" height="10"/><rect x="702.500" y="530.500" width="10" height="10"/><rect x="702.500" y="548.500" width="10" height="10"/><rect x="702.500" y="566.500" width="10" height="10"/><rect x="702.500" y="584.500" width="10" height="10"/><rect x="702.500" y="602.500" width="10" height="2" /></g>
<g fill="none" stroke="#000" stroke-width="2"><path d="M704 444l2.500 3 4.500-6"/><path d="M704 463l2.500 3 4.500-6"/><path d="M704 481l2.500 3 4.500-6"/><path d="M704 499l2.500 3 4.500-6"/><path d="M704 517l2.500 3 4.500-6"/><path d="M704 535l2.500 3 4.500-6"/><path d="M704 553l2.500 3 4.500-6"/><path d="M704 571l2.500 3 4.500-6"/><path d="M704 589l2.500 3 4.500-6"/></g>
<text x="717" y="449" textLength="68" lengthAdjust="spacingAndGlyphs">(すべて選択)</text>
<text x="717" y="468">1100</text><text x="717" y="486">1400</text><text x="717" y="504">1500</text><text x="717" y="522">1800</text><text x="717" y="540">2000</text><text x="717" y="558">2200</text><text x="717" y="576">2300</text><text x="717" y="594">2500</text>
<rect x="751.500" y="623.500" width="72" height="24" fill="#e1e1e1" stroke="#adadad"/>
<rect x="835.500" y="623.500" width="72" height="24" fill="#e1e1e1" stroke="#adadad"/>
<text x="779" y="640">OK</text>
<text x="848" y="640" textLength="47" lengthAdjust="spacingAndGlyphs">キャンセル</text>
<path d="M649 653.500h266" stroke="#e0e0e0"/>
<path d="M911 656h2v2h-2zM908 659h2v2h-2zM911 659h2v2h-2z" fill="#999"/>

<!-- submenu -->
<rect x="916.500" y="381.500" width="192" height="272" fill="#fff" stroke="#b4b4b4" filter="url(#sh)"/>
<text x="949" y="399" textLength="115" lengthAdjust="spacingAndGlyphs">指定の値に等しい(<tspan class="u">E</tspan>)...</text>
<text x="949" y="423" textLength="133" lengthAdjust="spacingAndGlyphs">指定の値に等しくない(<tspan class="u">N</tspan>)...</text>
<path d="M949 431.500h159M949 627.500h159" stroke="#d9d9d9"/>
<text x="949" y="449" textLength="125" lengthAdjust="spacingAndGlyphs">指定の値より大きい(<tspan class="u">G</tspan>)...</text>
<text x="949" y="473" textLength="100" lengthAdjust="spacingAndGlyphs">指定の値以上(<tspan class="u">O</tspan>)...</text>
<text x="949" y="497" textLength="122" lengthAdjust="spacingAndGlyphs">指定の値より小さい(<tspan class="u">L</tspan>)...</text>
<text x="949" y="521" textLength="100" lengthAdjust="spacingAndGlyphs">指定の値以下(<tspan class="u">Q</tspan>)...</text>
<text x="949" y="545" textLength="103" lengthAdjust="spacingAndGlyphs">指定の範囲内(<tspan class="u">W</tspan>)...</text>
<rect x="916.500" y="554.500" width="192" height="25" rx="3" fill="#c6c6c6" stroke="#f00" stroke-width="7"/>
<text x="949" y="571" textLength="71" lengthAdjust="spacingAndGlyphs">トップテン(<tspan class="u">T</tspan>)...</text>
<text x="949" y="595" textLength="70" lengthAdjust="spacingAndGlyphs">平均より上(<tspan class="u">A</tspan>)</text>
<text x="949" y="619" textLength="71" lengthAdjust="spacingAndGlyphs">平均より下(<tspan class="u">O</tspan>)</text>
<text x="949" y="645" textLength="135" lengthAdjust="spacingAndGlyphs">ユーザー設定フィルター(<tspan class="u">F</tspan>)...</text>

<!-- numbered callouts -->
<g><circle cx="950" cy="249" r="19.500" fill="#fff" filter="url(#sc)"/><circle cx="950" cy="249" r="17" fill="#fff" stroke="#f00" stroke-width="1.500"/><text x="950" y="259" style="text-anchor:middle;font-size:28px;font-weight:bold;fill:#f00">1</text></g>
<g><circle cx="609" cy="393" r="19.500" fill="#fff" filter="url(#sc)"/><circle cx="609" cy="393" r="17" fill="#fff" stroke="#f00" stroke-width="1.500"/><text x="609" y="403" style="text-anchor:middle;font-size:28px;font-weight:bold;fill:#f00">2</text></g>
<g><circle cx="1149" cy="564" r="19.500" fill="#fff" filter="url(#sc)"/><circle cx="1149" cy="564" r="17" fill="#fff" stroke="#f00" stroke-width="1.500"/><text x="1149" y="574" style="text-anchor:middle;font-size:28px;font-weight:bold;fill:#f00">3</text></g>
</svg>
</body></html>
